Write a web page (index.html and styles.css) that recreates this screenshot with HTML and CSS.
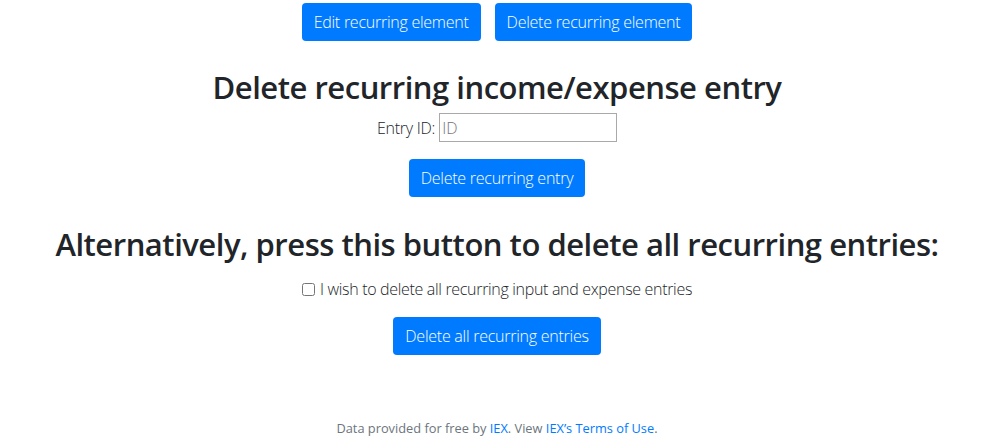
FILE: index.html
```html
<!DOCTYPE html>
<html>
<head>
<meta charset="utf-8">
<link rel="stylesheet" href="styles.css">
</head>
<body>
<div class="page">
  <div class="top-actions">
    <button class="btn">Edit recurring element</button>
    <button class="btn">Delete recurring element</button>
  </div>
  <h2 class="title first">Delete recurring income/expense entry</h2>
  <div class="field-row">
    <label class="field-label" for="eid">Entry ID:</label>
    <input class="field-input" id="eid" type="text" placeholder="ID">
  </div>
  <button class="btn single">Delete recurring entry</button>
  <h2 class="title second">Alternatively, press this button to delete all recurring entries:</h2>
  <div class="check-row">
    <input class="check" type="checkbox" id="chk">
    <label class="check-label" for="chk">I wish to delete all recurring input and expense entries</label>
  </div>
  <button class="btn single">Delete all recurring entries</button>
  <footer class="footer">Data provided for free by <a href="#">IEX</a>. View <a href="#">IEX’s Terms of Use</a>.</footer>
</div>
</body>
</html>
```
FILE: styles.css
```css
html, body {
  margin: 0;
  padding: 0;
  background: #fff;
}
body {
  font-family: "Open Sans", "Noto Sans", sans-serif;
  font-weight: 300;
  color: #212529;
  font-size: 16px;
  letter-spacing: -0.25px;
}
.page {
  display: flex;
  flex-direction: column;
  align-items: center;
  padding-top: 3px;
  padding-left: 8px;
}
.top-actions {
  display: flex;
  gap: 14px;
}
.btn {
  font-family: inherit;
  font-weight: 300;
  font-size: 16px;
  letter-spacing: -0.25px;
  line-height: 24px;
  padding: 7px 12px;
  border: 0;
  border-radius: 4px;
  background: #007bff;
  color: #fff;
  height: 38px;
}
.title {
  margin: 0;
  font-weight: 600;
  font-size: 31px;
  letter-spacing: -0.48px;
  line-height: 38px;
  color: #212529;
  text-align: center;
}
.title.first { margin-top: 27px; }
.field-row {
  display: flex;
  align-items: center;
  gap: 4px;
  margin-top: 7px;
}
.field-label { font-size: 16px; }
.field-input {
  width: 172px;
  height: 25px;
  border: 1px solid #a9a9a9;
  padding: 1px 2px;
  font-family: inherit;
  font-weight: 300;
  font-size: 16px;
  color: #212529;
  margin: 0;
}
.field-input::placeholder { color: #757575; }
.single { margin-top: 17px; }
.title.second { margin-top: 28px; }
.check-row {
  display: flex;
  align-items: center;
  gap: 5px;
  margin-top: 15px;
  height: 22px;
}
.check {
  width: 13px;
  height: 13px;
  margin: 0;
}
.check-label { letter-spacing: -0.32px; }
.check-row + .single { margin-top: 17px; }
.footer {
  margin-top: 64px;
  font-size: 12.8px;
  line-height: 18px;
  font-weight: 400;
  letter-spacing: 0;
  color: #6c757d;
}
.footer a {
  color: #007bff;
  text-decoration: none;
}
```
